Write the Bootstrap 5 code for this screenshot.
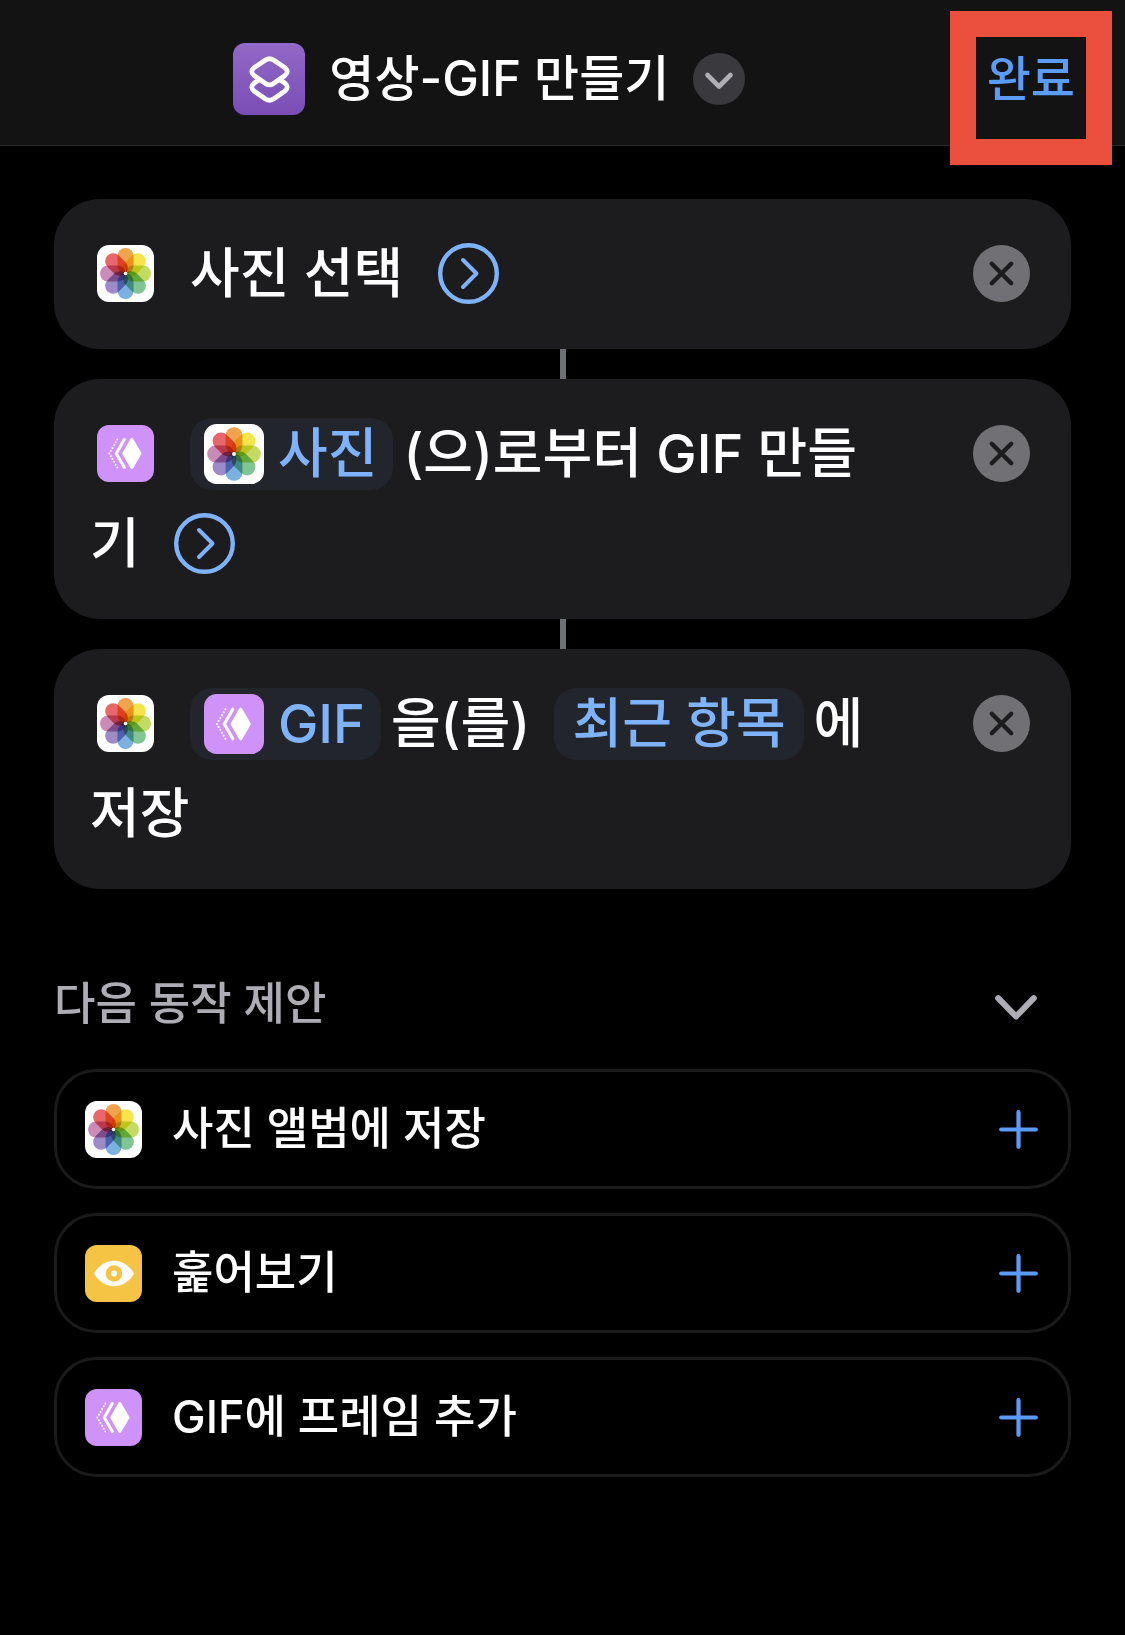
<!DOCTYPE html>
<html lang="ko" data-bs-theme="dark">
<head>
<meta charset="utf-8">
<meta name="viewport" content="width=device-width, initial-scale=1">
<title>영상-GIF 만들기</title>
<link href="https://cdn.jsdelivr.net/npm/bootstrap@5.3.0/dist/css/bootstrap.min.css" rel="stylesheet">
<style>
  body { background: #000; color: #fff; font-family: Inter, "Noto Sans CJK KR", sans-serif; font-weight: 500; }
  svg { flex: none; }
  .plain-btn { background: none; border: 0; padding: 0; line-height: 1; color: inherit; font-weight: inherit; }
  .topbar { background: #131313; border-bottom: 1px solid #2a2a2b; padding: 43px 50px 30px 0; }
  .topbar-title { font-size: 49px; line-height: 72px; font-weight: 500; margin: 0 24px; }
  .done-btn { color: #5a9cf8; font-size: 48px; line-height: 72px; }
  .done-frame { position: absolute; inset: -32px -37px -50px; border: 26px solid #eb4f3d; pointer-events: none; }
  .flow { padding: 53px 54px; }
  .action { background: #1c1c1e; border-radius: 46px; padding: 30px 41px 30px 36px; }
  .action-text { font-size: 54px; line-height: 90px; margin-right: 80px; }
  .action-icon { width: 57px; height: 57px; margin: 0 36px 0 7px; vertical-align: -9px; }
  .close-btn { margin-top: 16px; }
  .more-btn { margin-left: 20px; vertical-align: -11px; }
  .chip { display: inline-block; height: 72px; line-height: 72px; border-radius: 22px; background: #22252c; color: #7eb3fb; padding: 0 16px 0 14px; margin-right: 10px; }
  .chip svg { width: 60px; height: 60px; margin-right: 14px; vertical-align: -11px; }
  .chip-text { padding: 0 18px; margin-left: 10px; }
  .link-line { width: 6px; height: 30px; background: #6e7078; }
  .suggest-head { color: #aeadb3; margin: 85px 34px 35px 0; }
  .suggest-head h2 { color: inherit; font-size: 45px; line-height: 60px; font-weight: 500; }
  .suggest { border: 3px solid #1a1a1b; border-radius: 42px; padding: 28px 30px 28px 28px; gap: 30px; height: 120px; font-size: 45px; line-height: 58px; font-weight: 500; color: #fff; text-align: left; background: #000; }
</style>
</head>
<body>
<svg width="0" height="0" class="position-absolute" aria-hidden="true">
  <defs>
    <linearGradient id="violet" x1="0" y1="0" x2="0" y2="1"><stop offset="0" stop-color="#9169c6"/><stop offset="1" stop-color="#7a4db6"/></linearGradient>
    <symbol id="photos" viewBox="0 0 57 57">
      <rect width="57" height="57" rx="12" fill="#fff"/>
      <g transform="translate(28.5 28.5)" style="isolation:isolate">
        <g class="petals">
          <rect x="-8" y="-25.5" width="16" height="25.5" rx="8" fill="#f1a34d" style="mix-blend-mode:multiply"/>
          <rect x="-8" y="-25.5" width="16" height="25.5" rx="8" fill="#f6e54a" transform="rotate(45)" style="mix-blend-mode:multiply"/>
          <rect x="-8" y="-25.5" width="16" height="25.5" rx="8" fill="#c4da60" transform="rotate(90)" style="mix-blend-mode:multiply"/>
          <rect x="-8" y="-25.5" width="16" height="25.5" rx="8" fill="#80c592" transform="rotate(135)" style="mix-blend-mode:multiply"/>
          <rect x="-8" y="-25.5" width="16" height="25.5" rx="8" fill="#7bb1e0" transform="rotate(180)" style="mix-blend-mode:multiply"/>
          <rect x="-8" y="-25.5" width="16" height="25.5" rx="8" fill="#9c8bc6" transform="rotate(225)" style="mix-blend-mode:multiply"/>
          <rect x="-8" y="-25.5" width="16" height="25.5" rx="8" fill="#ca8bb6" transform="rotate(270)" style="mix-blend-mode:multiply"/>
          <rect x="-8" y="-25.5" width="16" height="25.5" rx="8" fill="#e8676a" transform="rotate(315)" style="mix-blend-mode:multiply"/>
        </g>
        <circle r="1.8" fill="#fff"/>
      </g>
    </symbol>
    <symbol id="gif" viewBox="0 0 57 57">
      <rect width="57" height="57" rx="12" fill="#cf92f9"/>
      <path d="M34.8 14.5 43 28.5 34.8 42.5 26.8 28.5Z" fill="#fff" stroke="#fff" stroke-width="3" stroke-linejoin="round"/>
      <path d="M27.3 14.5 19.3 28.5 27.3 42.5" fill="none" stroke="#fff" stroke-width="3" stroke-linecap="round" stroke-linejoin="round"/>
      <path d="M20.3 14.5 12.3 28.5 20.3 42.5" fill="none" stroke="#fff" stroke-width="2" stroke-linecap="round" stroke-dasharray="0 3.22"/>
    </symbol>
    <symbol id="more" viewBox="0 0 61 61">
      <circle cx="30.5" cy="30.5" r="28.3" fill="none" stroke="#7eb3fb" stroke-width="4.4"/>
      <path d="M25 17 38.5 30.5 25 44" fill="none" stroke="#7eb3fb" stroke-width="4" stroke-linecap="round" stroke-linejoin="round"/>
    </symbol>
    <symbol id="close" viewBox="0 0 57 57">
      <circle cx="28.5" cy="28.5" r="28.5" fill="#707075"/>
      <path d="M18.8 18.8 38.2 38.2M38.2 18.8 18.8 38.2" stroke="#1c1c1e" stroke-width="4.4" stroke-linecap="round"/>
    </symbol>
    <symbol id="plus" viewBox="0 0 39 39">
      <path d="M19.5 2.2V36.8M2.2 19.5H36.8" stroke="#5a9cf8" stroke-width="4.2" stroke-linecap="round"/>
    </symbol>
  </defs>
</svg>

<header class="topbar d-flex align-items-center">
  <div class="d-flex align-items-center justify-content-center flex-grow-1 pe-2">
    <svg width="72" height="72" viewBox="0 0 72 72" aria-hidden="true">
      <rect width="72" height="72" rx="12" fill="url(#violet)"/>
      <g fill="none" stroke="#fff" stroke-width="4.8" stroke-linecap="round" stroke-linejoin="round">
        <path d="M32.5 17Q36.5 14.6 40.5 17L52 24.8Q56.5 28.5 52 32.5L40.5 40.5Q36.5 43.3 32.5 40.5L21 32.5Q16.5 28.5 21 24.8Z"/>
        <path d="M25.5 37 21 40.3Q16.5 44 21 48L32.5 56Q36.5 58.4 40.5 56L52 48Q56.5 44 52 40.3L47.5 37"/>
      </g>
    </svg>
    <h1 class="topbar-title">영상-GIF 만들기</h1>
    <button class="plain-btn" type="button" aria-label="단축어 옵션">
      <svg class="d-block" width="52" height="52" viewBox="0 0 52 52"><circle cx="26" cy="26" r="26" fill="#3a3a3e"/><path d="M14.5 22 26 33.5 37.5 22" fill="none" stroke="#aeaeb4" stroke-width="4.6" stroke-linecap="round" stroke-linejoin="round"/></svg>
    </button>
  </div>
  <button class="plain-btn done-btn position-relative" type="button">완료<span class="done-frame"></span></button>
</header>

<main class="flow">
  <section class="action d-flex align-items-start">
    <div class="action-text flex-grow-1"><svg class="action-icon" aria-hidden="true"><use href="#photos"/></svg>사진 선택 <button class="plain-btn more-btn" type="button" aria-label="더 보기"><svg class="d-block" width="61" height="61"><use href="#more"/></svg></button></div>
    <button class="plain-btn close-btn" type="button" aria-label="삭제"><svg class="d-block" width="57" height="57"><use href="#close"/></svg></button>
  </section>
  <div class="link-line mx-auto"></div>
  <section class="action d-flex align-items-start">
    <div class="action-text flex-grow-1"><svg class="action-icon" aria-hidden="true"><use href="#gif"/></svg><span class="chip"><svg aria-hidden="true"><use href="#photos"/></svg>사진</span>(으)로부터 GIF 만들기 <button class="plain-btn more-btn" type="button" aria-label="더 보기"><svg class="d-block" width="61" height="61"><use href="#more"/></svg></button></div>
    <button class="plain-btn close-btn" type="button" aria-label="삭제"><svg class="d-block" width="57" height="57"><use href="#close"/></svg></button>
  </section>
  <div class="link-line mx-auto"></div>
  <section class="action d-flex align-items-start">
    <div class="action-text flex-grow-1"><svg class="action-icon" aria-hidden="true"><use href="#photos"/></svg><span class="chip"><svg aria-hidden="true"><use href="#gif"/></svg>GIF</span>을(를) <span class="chip chip-text">최근 항목</span>에 저장</div>
    <button class="plain-btn close-btn" type="button" aria-label="삭제"><svg class="d-block" width="57" height="57"><use href="#close"/></svg></button>
  </section>

  <div class="suggest-head d-flex align-items-center justify-content-between">
    <h2 class="m-0">다음 동작 제안</h2>
    <button class="plain-btn mt-2" type="button" aria-label="접기"><svg class="d-block" width="42" height="26" viewBox="0 0 42 26"><path d="M3.2 3.2 21 21.5 38.8 3.2" fill="none" stroke="#aeadb3" stroke-width="6" stroke-linecap="round" stroke-linejoin="round"/></svg></button>
  </div>

  <div class="d-grid gap-4">
    <button class="suggest d-flex align-items-center" type="button"><svg width="57" height="57"><use href="#photos"/></svg><span class="flex-grow-1">사진 앨범에 저장</span><svg width="39" height="39"><use href="#plus"/></svg></button>
    <button class="suggest d-flex align-items-center" type="button"><svg width="57" height="57" viewBox="0 0 57 57"><rect width="57" height="57" rx="12" fill="#f6c445"/><path d="M9 28.5C13 21 21 15.8 29 15.8S45 21 49 28.5C45 36 37 41.2 29 41.2S13 36 9 28.5Z" fill="#fff"/><circle cx="29" cy="28.5" r="8.2" fill="#f6c445"/><circle cx="29" cy="28.5" r="3" fill="#fff"/></svg><span class="flex-grow-1">훑어보기</span><svg width="39" height="39"><use href="#plus"/></svg></button>
    <button class="suggest d-flex align-items-center" type="button"><svg width="57" height="57"><use href="#gif"/></svg><span class="flex-grow-1">GIF에 프레임 추가</span><svg width="39" height="39"><use href="#plus"/></svg></button>
  </div>
</main>
<script src="https://cdn.jsdelivr.net/npm/bootstrap@5.3.0/dist/js/bootstrap.bundle.min.js"></script>
</body>
</html>
